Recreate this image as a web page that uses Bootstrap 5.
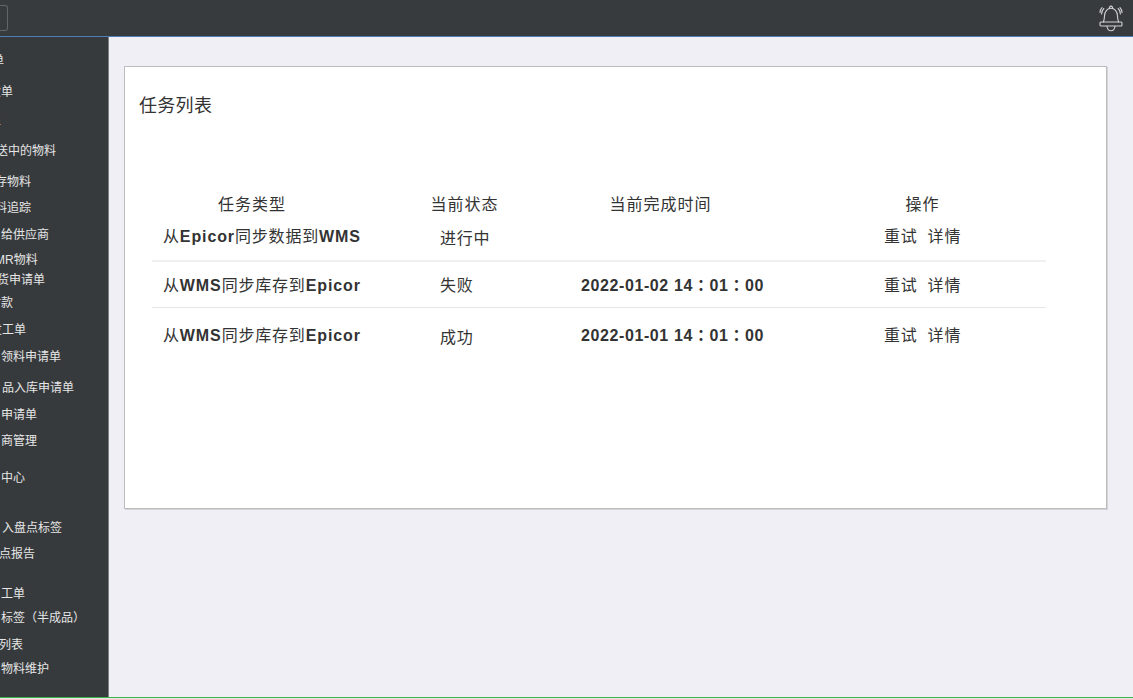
<!DOCTYPE html>
<html lang="zh">
<head>
<meta charset="utf-8">
<title>任务列表</title>
<link href="https://cdn.jsdelivr.net/npm/bootstrap@5.3.0/dist/css/bootstrap.min.css" rel="stylesheet">
<style>
html,body{height:100%;overflow:hidden}
body{font-family:"Liberation Sans","Noto Sans CJK SC",sans-serif;background:#efeff5;color:#333}
.top-bar{height:37px;background:#373b3e;border-bottom:1px solid #4f7fb5}
.menu-toggle{width:8px;height:26px;margin-top:5px;border:1px solid #62666a;border-left:0;border-radius:0 3px 3px 0}
.bell-ico{width:24px;height:27px;margin:5px 10px 0 0}
.shell{height:660px}
.side-menu{width:109px;height:660px;background:#373a3d;border-right:1px solid #7d8083;color:#e6e6e6;font-size:12px;line-height:16px;overflow:hidden;white-space:nowrap;padding:0;margin:0;list-style:none;flex:none}
.side-menu li{height:16px}
.main-pane{padding:29px 26px 0 15px}
.task-panel{height:443px;background:#fff;border:1px solid #bdbdbd;box-shadow:1px 1px 0 #d4d4d8;padding:27px 14px 0}
.task-title{font-size:18px;line-height:24px;margin:0 0 75px;font-weight:400;color:#333;letter-spacing:.3px}
.task-grid{width:894px;margin-left:13px;font-size:16px;line-height:24px;letter-spacing:.8px}
.task-head,.task-row{display:grid;grid-template-columns:222px 170px 202px 1fr}
.task-head{height:29px;letter-spacing:1px}
.task-head>div{text-align:center}
.task-head>.h-type{padding-right:22px}
.task-head>.h-stat{padding-left:11px}
.task-head>.h-time{padding-left:31px}
.task-head>.h-ops{padding-left:53px}
.task-row{border-bottom:1px solid #e6e6e6;align-items:start;white-space:nowrap}
.task-row:last-child{border-bottom:0}
.r1{height:40px;padding-top:3px;border-bottom:2px solid #f0f0f0}
.r2{height:46px;padding-top:12px}
.r3{height:46px;padding-top:16px}
.task-row b{font-weight:700;letter-spacing:.9px}
.cell-name{padding-left:11px}
.cell-stat{padding-left:66px}
.stat-low{padding-top:2px}
.cell-time{padding-left:37px;font-family:"Liberation Sans","Noto Sans CJK TC",sans-serif}
.task-row .cell-time b{letter-spacing:.6px}
.cell-ops{padding-left:138px}
.ops-gap{margin-left:10px}
.foot-line{height:2px;background:#e6e6e6;border-top:1px solid #3cb54a}
</style>
<style>
.side-menu li:nth-child(1){margin-top:16px;margin-left:-20px}
.side-menu li:nth-child(2){margin-top:15px;margin-left:-23px}
.side-menu li:nth-child(3){margin-top:14px;margin-left:-11px}
.side-menu li:nth-child(4){margin-top:13px;margin-left:-4px}
.side-menu li:nth-child(5){margin-top:15px;margin-left:-5px}
.side-menu li:nth-child(6){margin-top:10px;margin-left:-5px}
.side-menu li:nth-child(7){margin-top:11px;margin-left:1px}
.side-menu li:nth-child(8){margin-top:9px;margin-left:-5px}
.side-menu li:nth-child(9){margin-top:4px;margin-left:-3px}
.side-menu li:nth-child(10){margin-top:7px;margin-left:-11px}
.side-menu li:nth-child(11){margin-top:11px;margin-left:-10px}
.side-menu li:nth-child(12){margin-top:11px;margin-left:1px}
.side-menu li:nth-child(13){margin-top:15px;margin-left:2px}
.side-menu li:nth-child(14){margin-top:11px;margin-left:1px}
.side-menu li:nth-child(15){margin-top:10px;margin-left:1px}
.side-menu li:nth-child(16){margin-top:21px;margin-left:1px}
.side-menu li:nth-child(17){margin-top:34px;margin-left:2px}
.side-menu li:nth-child(18){margin-top:10px;margin-left:-1px}
.side-menu li:nth-child(19){margin-top:24px;margin-left:1px}
.side-menu li:nth-child(20){margin-top:8px;margin-left:1px}
.side-menu li:nth-child(21){margin-top:11px;margin-left:-1px}
.side-menu li:nth-child(22){margin-top:8px;margin-left:1px}
</style>
</head>
<body>
<header class="top-bar d-flex justify-content-between align-items-start">
  <div class="menu-toggle"></div>
  <svg class="bell-ico" viewBox="0 0 24 27" fill="none" stroke="#d2d2d2" stroke-width="1.1" stroke-linecap="round" stroke-linejoin="round">
    <path d="M10.500 3.300a1.600 1.600 0 1 1 3 0"/>
    <path d="M4.500 17c.7-2 .9-4 1-6 .2-4.700 3-7.700 6.500-7.700s6.300 3 6.500 7.700c.1 2 .3 4 1 6"/>
    <rect x="1" y="17" width="22" height="4" rx="1"/>
    <path d="M8 21.200c.3 2.900 2 4.500 4 4.500s3.700-1.600 4-4.500"/>
    <path d="M4.800 3.500C3.300 5 2.700 6.700 2.600 9M3 2.700C1.700 4 1.100 5.500 1 7.500M19.200 3.500c1.500 1.500 2.100 3.200 2.200 5.500M21 2.700c1.300 1.300 1.900 2.800 2 4.800"/>
  </svg>
</header>
<div class="shell d-flex">
  <ul class="side-menu">
    <li>订单</li>
    <li>收货单</li>
    <li>单</li>
    <li>送中的物料</li>
    <li>存物料</li>
    <li>料追踪</li>
    <li>给供应商</li>
    <li>MR物料</li>
    <li>货申请单</li>
    <li>付款</li>
    <li>发工单</li>
    <li>领料申请单</li>
    <li>品入库申请单</li>
    <li>申请单</li>
    <li>商管理</li>
    <li>中心</li>
    <li>入盘点标签</li>
    <li>点报告</li>
    <li>工单</li>
    <li>标签（半成品）</li>
    <li>列表</li>
    <li>物料维护</li>
  </ul>
  <main class="main-pane flex-grow-1">
    <section class="task-panel">
      <h1 class="task-title">任务列表</h1>
      <div class="task-grid">
        <div class="task-head"><div class="h-type">任务类型</div><div class="h-stat">当前状态</div><div class="h-time">当前完成时间</div><div class="h-ops">操作</div></div>
        <div class="task-row r1"><div class="cell-name">从<b>Epicor</b>同步数据到<b>WMS</b></div><div class="cell-stat stat-low">进行中</div><div class="cell-time"></div><div class="cell-ops">重试<span class="ops-gap">详情</span></div></div>
        <div class="task-row r2"><div class="cell-name">从<b>WMS</b>同步库存到<b>Epicor</b></div><div class="cell-stat">失败</div><div class="cell-time"><b>2022-01-02 14：01：00</b></div><div class="cell-ops">重试<span class="ops-gap">详情</span></div></div>
        <div class="task-row r3"><div class="cell-name">从<b>WMS</b>同步库存到<b>Epicor</b></div><div class="cell-stat stat-low">成功</div><div class="cell-time"><b>2022-01-01 14：01：00</b></div><div class="cell-ops">重试<span class="ops-gap">详情</span></div></div>
      </div>
    </section>
  </main>
</div>
<div class="foot-line"></div>
<script src="https://cdn.jsdelivr.net/npm/bootstrap@5.3.0/dist/js/bootstrap.bundle.min.js"></script>
</body>
</html>
